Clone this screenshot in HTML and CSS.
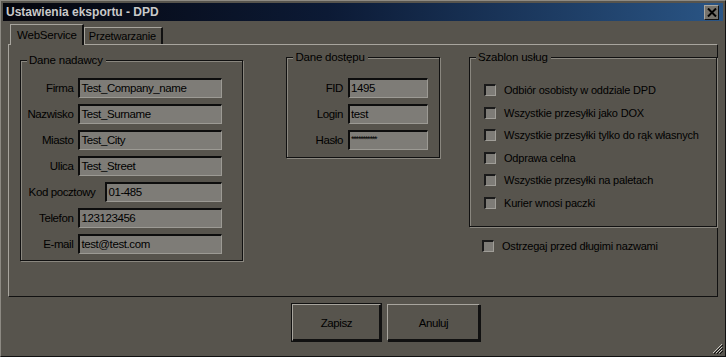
FILE: index.html
```html
<!DOCTYPE html>
<html lang="pl">
<head>
<meta charset="UTF-8">
<title>Ustawienia eksportu - DPD</title>
<link rel="stylesheet" href="styles.css">
</head>
<body>
<div class="window">
    <div class="titlebar">
        <span class="title">Ustawienia eksportu - DPD</span>
        <button class="close-btn">
            <svg width="10" height="9" viewBox="0 0 10 9"><path d="M1 0.5 L9 8.5 M9 0.5 L1 8.5" stroke="#000" stroke-width="2"/></svg>
        </button>
    </div>

    <div class="tabs">
        <div class="tab active">WebService</div>
        <div class="tab">Przetwarzanie</div>
    </div>

    <div class="panel">
        <div class="group sender">
            <span class="legend">Dane nadawcy</span>
            <div class="row"><label>Firma</label><div class="field">Test_Company_name</div></div>
            <div class="row"><label>Nazwisko</label><div class="field">Test_Surname</div></div>
            <div class="row"><label>Miasto</label><div class="field">Test_City</div></div>
            <div class="row"><label>Ulica</label><div class="field">Test_Street</div></div>
            <div class="row"><label class="wide">Kod pocztowy</label><div class="field short">01-485</div></div>
            <div class="row"><label>Telefon</label><div class="field">123123456</div></div>
            <div class="row"><label>E-mail</label><div class="field">test@test.com</div></div>
        </div>

        <div class="group access">
            <span class="legend">Dane dostępu</span>
            <div class="row"><label>FID</label><div class="field small">1495</div></div>
            <div class="row"><label>Login</label><div class="field small">test</div></div>
            <div class="row"><label>Hasło</label><div class="field small pass">***********</div></div>
        </div>

        <div class="right-col">
            <div class="group services">
                <span class="legend">Szablon usług</span>
                <div class="check"><span class="box"></span>Odbiór osobisty w oddziale DPD</div>
                <div class="check"><span class="box"></span>Wszystkie przesyłki jako DOX</div>
                <div class="check"><span class="box"></span>Wszystkie przesyłki tylko do rąk własnych</div>
                <div class="check"><span class="box"></span>Odprawa celna</div>
                <div class="check"><span class="box"></span>Wszystkie przesyłki na paletach</div>
                <div class="check"><span class="box"></span>Kurier wnosi paczki</div>
            </div>
            <div class="check warn"><span class="box"></span>Ostrzegaj przed długimi nazwami</div>
        </div>
    </div>

    <div class="buttons">
        <button class="btn default">Zapisz</button>
        <button class="btn cancel">Anuluj</button>
    </div>

    <div class="grip">
        <svg width="12" height="12" viewBox="0 0 12 12"><path d="M11 2 L2 11 M11 5 L5 11 M11 8 L8 11" stroke="#c8c6c0" stroke-width="1"/><path d="M12 3 L3 12 M12 6 L6 12 M12 9 L9 12" stroke="#111" stroke-width="1"/></svg>
    </div>
</div>
</body>
</html>
```

FILE: styles.css
```css
html, body {
    margin: 0;
    padding: 0;
    background: #57544d;
}

body {
    font-family: "Liberation Sans", Arial, sans-serif;
    font-size: 11px;
    letter-spacing: -0.2px;
    color: #000;
}

.window {
    position: relative;
    width: 726px;
    height: 357px;
    box-sizing: border-box;
    background: #57544d;
    border: 1px solid #111;
    border-top-color: #8d8a83;
    border-left-color: #8d8a83;
    padding: 2px;
    display: flex;
    flex-direction: column;
}

.titlebar {
    height: 18px;
    display: flex;
    align-items: center;
    justify-content: space-between;
    background: linear-gradient(to right, #05050c 0%, #0c1a35 45%, #2a5585 100%);
    padding: 0 4px 0 3px;
}

.title {
    color: #c9c9c9;
    font-weight: bold;
    font-size: 12px;
    letter-spacing: 0;
}

.close-btn {
    width: 15px;
    height: 15px;
    padding: 0;
    background: #76736c;
    border: 1px solid #111;
    border-top-color: #a9a69f;
    border-left-color: #a9a69f;
    display: flex;
    align-items: center;
    justify-content: center;
}

.tabs {
    display: flex;
    align-items: flex-end;
    margin: 4px 0 0 7px;
    height: 19px;
    position: relative;
    z-index: 1;
}

.tab {
    height: 16px;
    padding: 0 5px 0 4px;
    line-height: 16px;
    font-size: 11px;
    border: 1px solid #111;
    border-bottom: none;
    border-top-color: #a8a59e;
    border-left-color: #a8a59e;
    border-right-width: 2px;
}

.tab.active {
    height: 20px;
    line-height: 20px;
    padding: 0 5px 0 6px;
    margin-bottom: -1px;
    background: #57544d;
    font-size: 11.5px;
}

.panel {
    margin: 0 5px 0 5px;
    height: 253px;
    box-sizing: border-box;
    border: 1px solid #111;
    border-top-color: #a8a59e;
    border-left-color: #a8a59e;
    display: flex;
    align-items: flex-start;
}

.group {
    position: relative;
    box-sizing: border-box;
    border: 1px solid #111;
    box-shadow: inset 1px 1px 0 #8a877f, 1px 1px 0 #8a877f;
}

.legend {
    position: absolute;
    top: -8px;
    left: 6px;
    padding: 0 3px 0 2px;
    background: #57544d;
    font-size: 11.5px;
    line-height: 14px;
}

.sender {
    width: 224px;
    height: 201px;
    margin: 15px 0 0 11px;
    padding: 17px 20px 0 0;
}

.access {
    width: 154px;
    height: 101px;
    margin: 12px 0 0 43px;
    padding: 20px 11px 0 0;
}

.right-col {
    margin: 12px 0 0 29px;
}

.services {
    width: 248px;
    height: 170px;
    padding: 21px 0 0 14px;
}

.row {
    display: flex;
    justify-content: flex-end;
    align-items: center;
    gap: 5px;
    height: 20px;
    margin-bottom: 6px;
}

.row label {
    font-size: 11.5px;
    letter-spacing: -0.4px;
}

.row label.wide {
    margin-right: 5px;
}

.field {
    width: 144px;
    height: 20px;
    box-sizing: border-box;
    background: #7e7c77;
    border-top: 2px solid #0d0d0d;
    border-left: 2px solid #0d0d0d;
    border-right: 1px solid #9c9a94;
    border-bottom: 1px solid #9c9a94;
    padding-left: 1px;
    line-height: 17px;
    font-size: 11.5px;
    letter-spacing: -0.4px;
    white-space: nowrap;
    overflow: hidden;
}

.field.short {
    width: 117px;
}

.field.small {
    width: 80px;
}

.field.pass {
    font-size: 9px;
    letter-spacing: -1.2px;
    line-height: 14px;
}

.check {
    display: flex;
    align-items: center;
    height: 22.5px;
    font-size: 11px;
    white-space: nowrap;
}

.check .box {
    width: 12px;
    height: 12px;
    box-sizing: border-box;
    background: #7e7c77;
    border-top: 2px solid #1a1a1a;
    border-left: 2px solid #1a1a1a;
    border-right: 1px solid #a09e98;
    border-bottom: 1px solid #a09e98;
    margin-right: 8px;
    flex: none;
}

.warn {
    margin: 8px 0 0 13px;
}

.buttons {
    display: flex;
    gap: 6px;
    margin: 7px 0 0 289px;
}

.btn {
    width: 89px;
    height: 37px;
    box-sizing: border-box;
    background: #57544d;
    font-family: "Liberation Sans", Arial, sans-serif;
    font-size: 11.5px;
    letter-spacing: -0.4px;
    color: #000;
    border: 1px solid #111;
    border-top-color: #a8a59e;
    border-left-color: #a8a59e;
    box-shadow: inset -1px -1px 0 #111, 1px 1px 0 #111;
    padding: 0;
}

.btn.default {
    outline: 1px solid #111;
}

.btn.cancel {
    width: 93px;
}

.grip {
    position: absolute;
    right: 2px;
    bottom: 2px;
    width: 12px;
    height: 12px;
}
```
